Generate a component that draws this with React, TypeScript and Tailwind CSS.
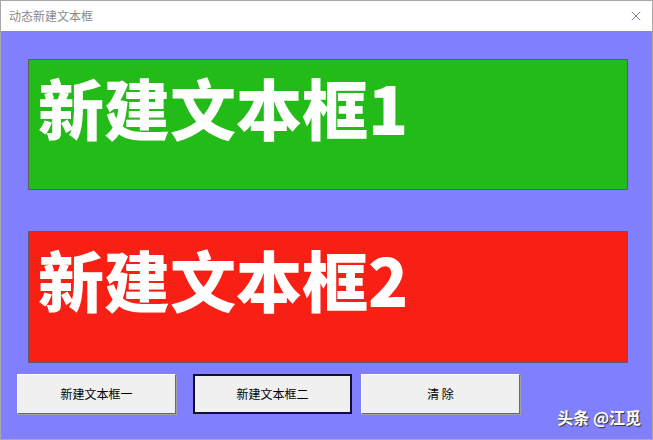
import { X } from "lucide-react";

const cjk = { fontFamily: '"Microsoft YaHei", "Noto Sans CJK SC", "Noto Sans", sans-serif' };

interface TextBoxProps {
  label: string;
  color: string;
  height: string;
}

function TextBox({ label, color, height }: TextBoxProps) {
  return (
    <div
      className={`ml-[27px] w-[600px] border border-[#5a5a6a] pl-[9px] pt-[13px] ${color} ${height}`}
    >
      <span className="block text-[66px] leading-none font-black text-white" style={cjk}>
        {label}
      </span>
    </div>
  );
}

export default function App() {
  return (
    <div className="relative flex h-[440px] w-[653px] flex-col border border-[#a8a8a8] bg-white" style={cjk}>
      {/* Title bar */}
      <div className="flex h-[30px] shrink-0 items-center justify-between bg-white pl-[8px] pr-[8px]">
        <span className="text-[12px] text-[#8a8a8a]">动态新建文本框</span>
        <X className="h-[16px] w-[16px] text-[#6a6a6a]" strokeWidth={1.2} />
      </div>

      {/* Form body */}
      <div className="flex flex-1 flex-col bg-[#8080ff] pt-[28px]">
        <TextBox label="新建文本框1" color="bg-[#22bb18]" height="h-[131px]" />
        <div className="h-[41px]" />
        <TextBox label="新建文本框2" color="bg-[#f81f14]" height="h-[132px]" />

        <div className="ml-[16px] mt-[11px] flex">
          <button className="h-[40px] w-[159px] border border-t-white border-l-white border-r-[#696969] border-b-[#696969] bg-[#f0f0f0] text-[12px] text-black shadow-[1px_1px_0_#a0a0a0]">
            新建文本框一
          </button>
          <button className="ml-[17px] h-[40px] w-[159px] border-2 border-[#101030] bg-[#f0f0f0] text-[12px] text-black">
            新建文本框二
          </button>
          <button className="ml-[9px] h-[40px] w-[159px] border border-t-white border-l-white border-r-[#696969] border-b-[#696969] bg-[#f0f0f0] text-[12px] text-black shadow-[1px_1px_0_#a0a0a0]">
            清 除
          </button>
        </div>
      </div>

      {/* Watermark */}
      <span className="absolute bottom-[10px] right-[11px] text-[16px] font-bold text-white [text-shadow:1px_1px_1px_#333]">
        头条 @江觅
      </span>
    </div>
  );
}
